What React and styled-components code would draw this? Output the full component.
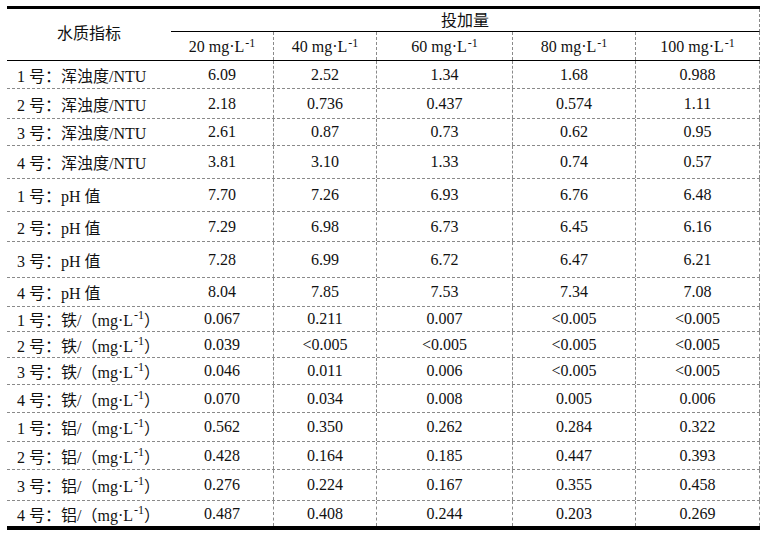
import React from 'react';
import styled, { createGlobalStyle } from 'styled-components';

const GlobalStyle = createGlobalStyle`
  *, *::before, *::after {
    box-sizing: border-box;
  }
  html, body {
    margin: 0;
    padding: 0;
    background: #fff;
  }
  body {
    font-family: "Liberation Serif", "Noto Sans CJK SC", serif;
    color: #111;
  }
`;

const COLS = '164px 103px 103px 136px 123px 124px';
const DASH = '1px dashed #8a8a8a';

const Page = styled.div`
  padding: 6px 0 0 7px;
`;

const Table = styled.div`
  width: 753px;
  border-top: 3px solid #000;
  border-bottom: 4px solid #000;
`;

const Header = styled.div`
  display: grid;
  grid-template-columns: ${COLS};
  grid-template-rows: 23px 28px;
  border-bottom: 1px solid #000;
`;

const IndexHead = styled.div`
  grid-row: 1 / span 2;
  grid-column: 1;
  display: flex;
  align-items: center;
  justify-content: center;
  font-size: 16px;
  padding-bottom: 5px;
`;

const GroupHead = styled.div`
  grid-row: 1;
  grid-column: 2 / span 5;
  display: flex;
  align-items: center;
  justify-content: center;
  font-size: 16px;
  border-bottom: 1px solid #000;
  border-right: ${DASH};
  padding-bottom: 3px;
`;

const UnitHead = styled.div`
  grid-row: 2;
  display: flex;
  align-items: center;
  justify-content: center;
  font-size: 16px;
  border-right: ${DASH};
  padding-top: 2px;
`;

const Sup = styled.sup`
  font-size: 0.75em;
  line-height: 0;
  position: relative;
  top: -0.3em;
  margin-left: 1px;
`;

const Row = styled.div`
  display: grid;
  grid-template-columns: ${COLS};
  height: ${(p) => p.$h}px;
  border-bottom: ${(p) => (p.$last ? 'none' : DASH)};
`;

const Label = styled.div`
  display: flex;
  align-items: center;
  padding-left: 10px;
  font-size: 16px;
  white-space: nowrap;
`;

const Cell = styled.div`
  display: flex;
  align-items: center;
  justify-content: center;
  font-size: 16px;
  border-right: ${DASH};
`;

const Unit = () => (
  <>
    mg·L<Sup>-1</Sup>
  </>
);

const doses = ['20', '40', '60', '80', '100'];

const rows = [
  { n: 1, k: 'turb', h: 28, v: ['6.09', '2.52', '1.34', '1.68', '0.988'] },
  { n: 2, k: 'turb', h: 30, v: ['2.18', '0.736', '0.437', '0.574', '1.11'] },
  { n: 3, k: 'turb', h: 27, v: ['2.61', '0.87', '0.73', '0.62', '0.95'] },
  { n: 4, k: 'turb', h: 33, v: ['3.81', '3.10', '1.33', '0.74', '0.57'] },
  { n: 1, k: 'ph', h: 33, v: ['7.70', '7.26', '6.93', '6.76', '6.48'] },
  { n: 2, k: 'ph', h: 30, v: ['7.29', '6.98', '6.73', '6.45', '6.16'] },
  { n: 3, k: 'ph', h: 36, v: ['7.28', '6.99', '6.72', '6.47', '6.21'] },
  { n: 4, k: 'ph', h: 29, v: ['8.04', '7.85', '7.53', '7.34', '7.08'] },
  { n: 1, k: 'fe', h: 25, v: ['0.067', '0.211', '0.007', '<0.005', '<0.005'] },
  { n: 2, k: 'fe', h: 26, v: ['0.039', '<0.005', '<0.005', '<0.005', '<0.005'] },
  { n: 3, k: 'fe', h: 27, v: ['0.046', '0.011', '0.006', '<0.005', '<0.005'] },
  { n: 4, k: 'fe', h: 28, v: ['0.070', '0.034', '0.008', '0.005', '0.006'] },
  { n: 1, k: 'al', h: 29, v: ['0.562', '0.350', '0.262', '0.284', '0.322'] },
  { n: 2, k: 'al', h: 28, v: ['0.428', '0.164', '0.185', '0.447', '0.393'] },
  { n: 3, k: 'al', h: 31, v: ['0.276', '0.224', '0.167', '0.355', '0.458'] },
  { n: 4, k: 'al', h: 25, v: ['0.487', '0.408', '0.244', '0.203', '0.269'] },
];

const labelText = (n, k) => {
  if (k === 'turb') return <>{n} 号：浑浊度/NTU</>;
  if (k === 'ph') return <>{n} 号：pH 值</>;
  const metal = k === 'fe' ? '铁' : '铝';
  return (
    <>
      {n} 号：{metal}/（<Unit />）
    </>
  );
};

const App = () => {
  return (
    <Page>
      <GlobalStyle />
      <Table>
        <Header>
          <IndexHead>水质指标</IndexHead>
          <GroupHead>投加量</GroupHead>
          {doses.map((d) => (
            <UnitHead key={d}>
              {d}&nbsp;<Unit />
            </UnitHead>
          ))}
        </Header>
        {rows.map((r, i) => (
          <Row key={i} $h={r.h} $last={i === rows.length - 1}>
            <Label>{labelText(r.n, r.k)}</Label>
            {r.v.map((v, j) => (
              <Cell key={j}>{v}</Cell>
            ))}
          </Row>
        ))}
      </Table>
    </Page>
  );
};

export default App;
